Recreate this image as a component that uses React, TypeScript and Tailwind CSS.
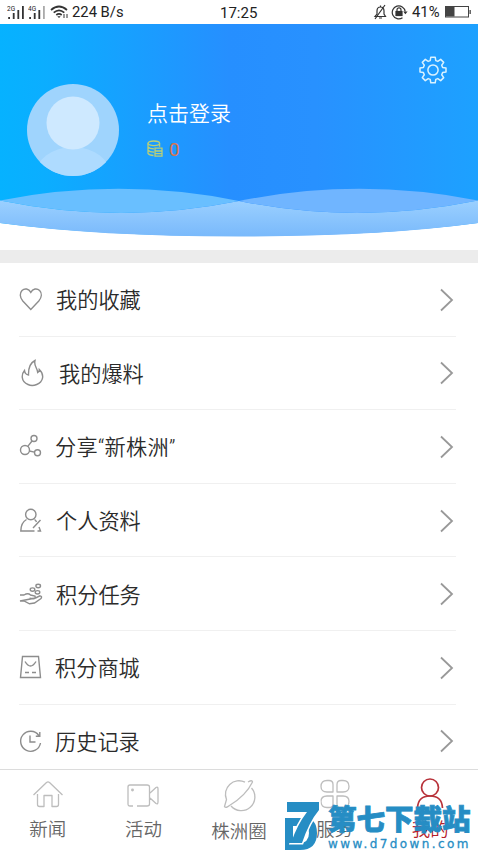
import React from 'react';
import clsx from 'clsx';

const Signal = ({ label, bars }: { label: string; bars: string[] }) => (
  <svg width="18" height="15" viewBox="0 0 18 15">
    <text x="0" y="5.5" fontSize="6.5" fill="#222">
      {label}
    </text>
    {bars.map((color, i) => (
      <rect
        key={i}
        x={1.2 + i * 4.6}
        y={[12, 8, 5, 1][i]}
        width="1.8"
        height={[2, 6, 9, 13][i]}
        fill={color}
      />
    ))}
  </svg>
);

const StatusBar = () => (
  <div className="flex h-6 shrink-0 items-center bg-white pr-[5px] pl-[7px] text-[14.8px] leading-6 text-[#222]">
    <div className="flex w-[213px] items-center">
      <Signal label="2G" bars={['#333', '#333', '#333', '#333']} />
      <span className="w-[3px]" />
      <Signal label="4G" bars={['#333', '#333', '#333', '#aaa']} />
      <svg className="ml-1" width="20" height="14" viewBox="0 0 20 14" fill="none" stroke="#333" strokeWidth="1.7">
        <path d="M1 5Q9 -2 17 5M3.7 7.6Q9 3 14.3 7.6M6.3 10Q9 7.8 11.7 10" />
        <path d="M7.3 11.2h3.4L9 13z" fill="#333" stroke="none" />
        <path d="M14 9v4M17 13V9" strokeWidth="1" />
      </svg>
      <span className="ml-[2px] whitespace-nowrap">224 B/s</span>
    </div>
    <span className="w-[153px] pt-px text-[15px]">17:25</span>
    <svg width="14" height="16" viewBox="0 0 14 16" fill="none" stroke="#333" strokeWidth="1.2">
      <path d="M2 12.5h10.5L11 10V7Q11 3 7.5 3Q4 3 4 7v3zM6 14h3M7.5 1.5V3M12 1 2 15" />
    </svg>
    <svg className="ml-1" width="18" height="16" viewBox="0 0 18 16" fill="none" stroke="#333" strokeWidth="1.2">
      <path d="M11.5 13.7A6.5 6.5 0 1 1 14.2 7.5" />
      <path d="M12.2 7.5h4.4L14.4 10.2z" fill="#333" stroke="none" />
      <rect x="5" y="7.5" width="6" height="4" fill="#333" />
      <path d="M6 7.5V5.8a2 2 0 0 1 4 0V7.5" />
    </svg>
    <span className="ml-[3px] w-[32px] text-[14.8px] whitespace-nowrap">41%</span>
    <svg width="28" height="14" viewBox="0 0 28 14">
      <rect x="1.5" y="1.5" width="23" height="10.5" fill="none" stroke="#444" />
      <rect x="2" y="2" width="8.5" height="9.5" fill="#444" />
      <rect x="25.5" y="5" width="1.3" height="4" fill="#444" />
    </svg>
  </div>
);

const GearIcon = () => (
  <svg width="30" height="30" viewBox="0 0 30 30" fill="none" stroke="#d9f2ff" strokeWidth="1.5" strokeLinejoin="round">
    <path d="M12.8 2.2h4.4l.6 3.4 2 .8 2.9-2 3 3-2 2.9.9 2.1 3.4.6v4l-3.4.6-.9 2.1 2 2.9-3 3-2.9-2-2 .8-.6 3.4h-4.4l-.6-3.4-2-.8-2.9 2-3-3 2-2.9-.9-2.1L2 17v-4l3.4-.6.9-2.1-2-2.9 3-3 2.9 2 2-.8z" />
    <circle cx="15" cy="15" r="5.1" />
  </svg>
);

const CoinsIcon = () => (
  <svg width="16" height="18" viewBox="0 0 16 18" fill="none" stroke="#b9cf78" strokeWidth="1.3">
    <ellipse cx="6.8" cy="3.3" rx="5.8" ry="2.3" />
    <path d="M1 3.3v10Q2.3 15.4 6.5 15.5M12.6 3.3v3.5M1 6.8q1.5 2 6 2M1 10.2q1.5 2 6 2M8 8.2h7v8H8zM8 11h7M8 13.6h7" />
  </svg>
);

const ProfileHeader = () => (
  <header className="relative h-[226px] shrink-0 bg-white">
    <svg className="absolute inset-0" width="478" height="226" viewBox="0 0 478 226">
      <defs>
        <linearGradient id="sky" x1="0" y1="0" x2="1" y2="0">
          <stop offset="0" stopColor="#06b2ff" />
          <stop offset="0.09" stopColor="#0baeff" />
          <stop offset="0.48" stopColor="#268fff" />
          <stop offset="0.66" stopColor="#2891ff" />
          <stop offset="1" stopColor="#1da1ff" />
        </linearGradient>
        <linearGradient id="wave" x1="0" y1="0" x2="0" y2="1">
          <stop offset="0" stopColor="#9bd0ff" />
          <stop offset="1" stopColor="#79b9fb" />
        </linearGradient>
      </defs>
      <path d="M0 0H478V199Q380 212 239 212Q98 212 0 199Z" fill="url(#sky)" />
      <path d="M0 176.5Q120 201 239 177Q358 201 478 176.5V199Q380 212.5 239 212.5Q98 212.5 0 199Z" fill="url(#wave)" />
      <path d="M0 176.5Q120 153 239 177Q120 201 0 176.5Z" fill="#69bfff" />
      <path d="M239 177Q358 153 478 176.5Q358 201 239 177Z" fill="#70b5ff" />
    </svg>
    <div className="relative flex pt-[60px] pl-[27px]">
      <svg width="92" height="92" viewBox="0 0 92 92">
        <defs>
          <clipPath id="avatar">
            <circle cx="46" cy="46" r="46" />
          </clipPath>
        </defs>
        <g clipPath="url(#avatar)">
          <rect width="92" height="92" fill="#9fd4fd" />
          <ellipse cx="46" cy="92" rx="38" ry="29" fill="#aedbff" />
          <circle cx="46" cy="39" r="26.5" fill="#cee9ff" />
        </g>
      </svg>
      <div className="ml-7 pt-4">
        <p className="text-[21px] leading-7 [font-weight:350] text-white">点击登录</p>
        <div className="mt-[9px] flex h-6 items-center">
          <CoinsIcon />
          <span className="ml-[6px] pt-[2px] text-[19px] leading-6 text-[#d8744f]">0</span>
        </div>
      </div>
    </div>
    <button className="absolute top-[31px] right-[30px]" aria-label="设置">
      <GearIcon />
    </button>
  </header>
);

// every list icon is drawn on a 26x28 grid
const icons: Record<string, React.ReactNode> = {
  heart: <path d="M11.8 24.5L3.8 16C.5 12.2.7 8 3 5.6C5.6 2.9 9.8 3.6 11.8 7.3C13.8 3.6 18 2.9 20.6 5.6C23 8 23 12.2 19.8 16Z" />,
  fire: <path d="M9 25.5C1.5 22.5 2.500 15 5.5 11.5Q6 15.5 9.5 16C9.3 9 11 4 16 1.5C14.5 7 18.500 9 18.7 13.5Q20.3 12.500 20.3 10.5C26 16 24 23 17.7 25.5Q13 27.5 9 25.500Z" />,
  share: (
    <>
      <circle cx="6" cy="18" r="4.5" />
      <circle cx="15" cy="6.5" r="3" />
      <circle cx="18.5" cy="20.8" r="3" />
      <path d="M8.800 14.400 13 9M10.400 19 15.500 20.100" />
    </>
  ),
  profile: (
    <>
      <circle cx="11.8" cy="8.5" r="5.2" />
      <path d="M7.500 13.500Q2 16.500 1.800 25H15.500M14 22 21.500 14M18.500 25H21.500L20 21M15.500 13.500Q17 14.500 17.500 16" />
    </>
  ),
  hand: (
    <>
      <path d="M1 15H5Q9 12.5 11.500 15L16 16Q17 19 14 18.800L10.500 18.200M16.500 18 21 15.800Q23.500 16.500 22 18.500L15.500 23L10.500 23.800L5 21H1Z" />
      <ellipse cx="13.5" cy="9.6" rx="2.3" ry="1.7" />
      <ellipse cx="19.2" cy="6" rx="2.3" ry="1.7" />
      <ellipse cx="18.5" cy="12.3" rx="2.3" ry="1.7" />
    </>
  ),
  bag: (
    <>
      <path d="M3.5 3.5H19.5L21.5 24.5H1.5Z" />
      <path d="M6 8.500Q11.500 17.500 17 8.500M6 19.500H10M13 19.500H17" />
    </>
  ),
  history: (
    <>
      <path d="M19.800 8.500A10 10 0 1 0 21.500 16M20.800 5V9.200H16.800" />
      <path d="M11 8.500V15H16.500" />
    </>
  ),
};

const menus = [
  { icon: 'heart', label: '我的收藏', textStyles: 'ml-[11px]' },
  { icon: 'fire', label: '我的爆料', textStyles: 'ml-[14px]' },
  { icon: 'share', label: '分享“新株洲”', textStyles: 'ml-[10px] tracking-[0.3px]' },
  { icon: 'profile', label: '个人资料', textStyles: 'ml-[11px]' },
  { icon: 'hand', label: '积分任务', textStyles: 'ml-[11px]' },
  { icon: 'bag', label: '积分商城', textStyles: 'ml-[10px]' },
  { icon: 'history', label: '历史记录', textStyles: 'ml-[10px]' },
];

const MenuRow = ({ icon, label, textStyles }: (typeof menus)[number]) => (
  <li className="mr-[22px] ml-[19px] flex h-[73.6px] shrink-0 items-center border-b border-[#f0f0f0]">
    <svg width="26" height="28" viewBox="0 0 26 28" fill="none" stroke="#8d8d8d" strokeWidth="1.4">
      {icons[icon]}
    </svg>
    <span className={clsx('pt-[4px] text-[21.2px] leading-8 [font-weight:350] whitespace-nowrap text-[#2b2b2b]', textStyles)}>
      {label}
    </span>
    <svg className="mt-px mr-[2px] ml-auto" width="15" height="24" viewBox="0 0 15 24" fill="none" stroke="#999" strokeWidth="1.8">
      <path d="M2 1.5 13 12 2 22.5" />
    </svg>
  </li>
);

const tabs = [
  {
    label: '新闻',
    icon: <path d="M1.500 16 14.500 3.500Q16 2.300 17.500 3.500L30.500 16M5.500 15V25.500Q5.500 27.500 7.500 27.500H12V16.500H20V27.500H24.500Q26.500 27.500 26.500 25.500V15" />,
  },
  {
    label: '活动',
    icon: (
      <>
        <path d="M6 27H3Q1 27 1 25V8Q1 6 3 6H20Q22.500 6 22.500 8V25Q22.500 27 20 27H10M23 14 29 8.500Q31 7.500 31 10V23Q31 25.500 29 24.500L23 19" />
        <circle cx="5.5" cy="11" r="0.8" />
      </>
    ),
  },
  {
    label: '株洲圈',
    textStyles: 'pt-[2px]',
    icon: (
      <path d="M22 3.200A13.500 13.500 0 0 0 3.500 20.500L1.500 27.500Q3 29.500 6.500 26.500Q23 16.500 29.500 3Q29.500 .500 25 3M28.500 9A13.500 13.500 0 0 1 8 27" />
    ),
  },
  {
    label: '服务',
    icon: (
      <path d="M8 1.500H10Q14 1.500 14 5.500V13H8Q2 13 2 7.500Q2 1.500 8 1.500ZM24 1.500Q30 1.500 30 7.500Q30 13 24 13H18V5.500Q18 1.500 22 1.500ZM8 17H14V25Q14 28.500 10 28.500H8Q2 28.500 2 22.500Q2 17 8 17ZM18 17H24Q30 17 30 22.500Q30 28.500 24 28.500H22Q18 28.500 18 25Z" />
    ),
  },
  {
    label: '我的',
    active: true,
    icon: (
      <>
        <circle cx="16" cy="8.5" r="8.5" />
        <path d="M3.500 29Q4 17 16 17Q28 17 28.500 29" />
      </>
    ),
  },
];

const TabBar = () => (
  <nav className="flex h-[81px] shrink-0 border-t border-[#dcdcdc] bg-white">
    {tabs.map(({ label, icon, active, textStyles }) => (
      <div
        key={label}
        className={clsx(
          'flex flex-1 flex-col items-center pt-[9px]',
          active ? 'text-[#b5202a]' : 'text-[#666]',
        )}
      >
        <svg
          className="overflow-visible"
          width="32"
          height="32"
          viewBox="0 0 32 32"
          fill="none"
          stroke={active ? '#b8323a' : '#bdbdbd'}
          strokeWidth={active ? 1.7 : 1.3}
          strokeLinejoin="round"
        >
          {icon}
        </svg>
        <span className={clsx('mt-[7px] text-[18.5px] leading-6 [font-weight:350]', textStyles)}>
          {label}
        </span>
      </div>
    ))}
  </nav>
);

const Watermark = () => (
  <div className="absolute top-[800px] left-[284px] flex h-[50px] w-[194px] text-[#268dc4]">
    <svg width="38" height="50" viewBox="0 0 38 50" fill="currentColor">
      <path fillRule="evenodd" d="M1 18H20Q33 18 33 33Q33 50 16 50H1ZM9 26V43H15Q25 43 25 33Q25 27 21 26Z" />
      <path d="M3 2H35V10Q25 22 18 43H7Q13 25 23 12H3Z" fill="none" stroke="#fff" strokeWidth="3" />
      <path d="M3 2H35V10Q25 22 18 43H7Q13 25 23 12H3Z" />
      <path d="M1 18H9V43H1Z" />
    </svg>
    <div className="ml-[6px] flex flex-col pt-[5px]">
      <span className="text-[28.5px] leading-[31px] font-black whitespace-nowrap [-webkit-text-stroke:0.8px_#268dc4]">
        第七下载站
      </span>
      <span className="font-['DejaVu_Sans'] text-[12px] leading-[16px] tracking-[2.4px] whitespace-nowrap [-webkit-text-stroke:0.3px_#268dc4]">
        www.d7down.com
      </span>
    </div>
  </div>
);

export default function App() {
  return (
    <div className="relative flex h-[850px] w-[478px] flex-col overflow-hidden bg-white font-[Roboto,'Noto_Sans_CJK_SC',sans-serif]">
      <StatusBar />
      <ProfileHeader />
      <div className="h-[13px] shrink-0 bg-[#ececec]" />
      <ul className="flex min-h-0 flex-1 flex-col overflow-hidden">
        {menus.map((menu) => (
          <MenuRow key={menu.label} {...menu} />
        ))}
      </ul>
      <TabBar />
      <Watermark />
    </div>
  );
}
